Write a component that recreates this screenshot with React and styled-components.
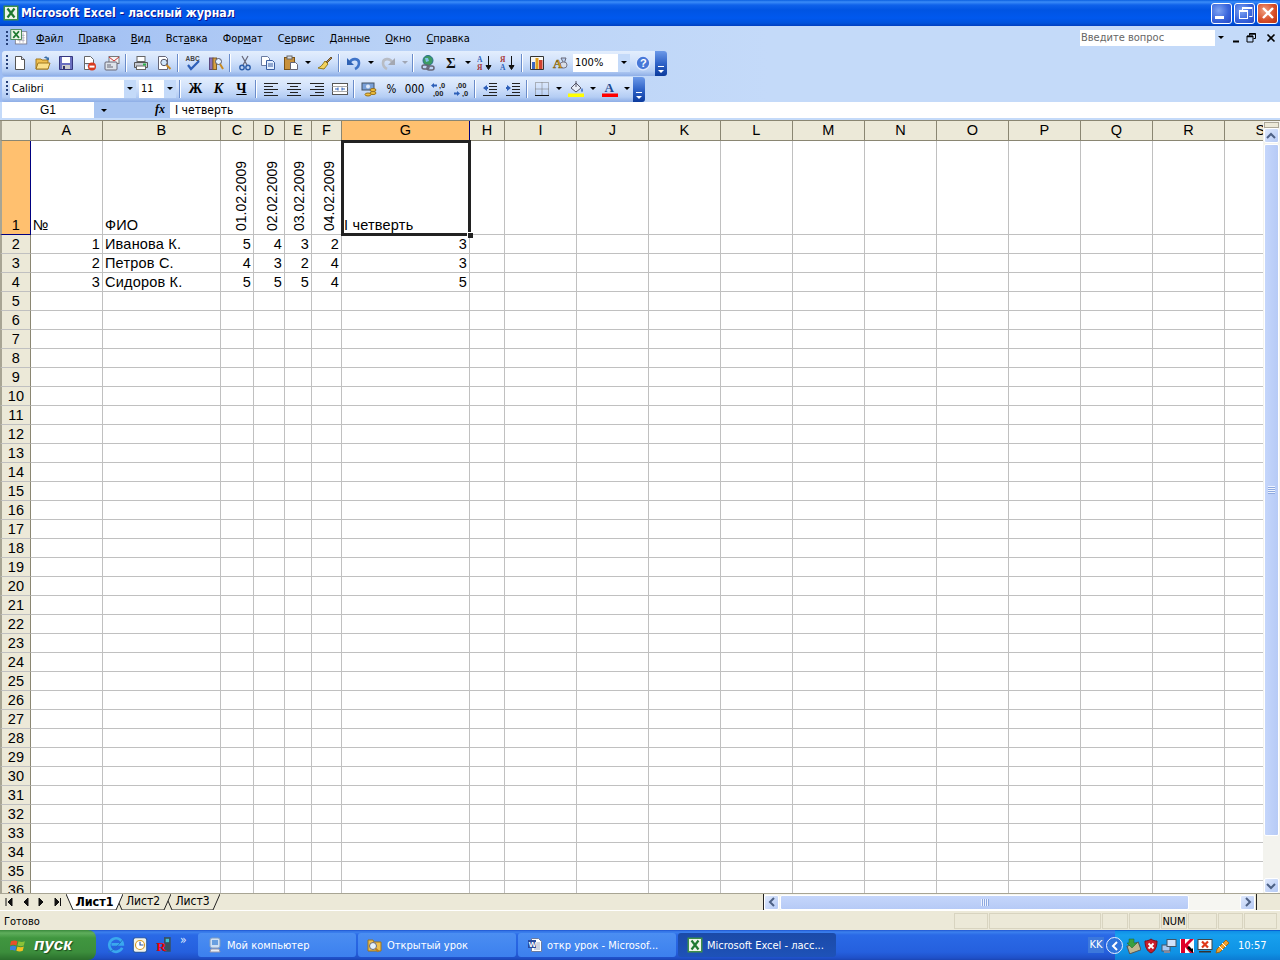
import React from 'react';
import styled, { createGlobalStyle } from 'styled-components';

const UI_FONT = `"DejaVu Sans Condensed", "Noto Sans", sans-serif`;
const CELL_FONT = `"Liberation Sans", Arial, sans-serif`;

const COLUMNS = [
    ['A', 72], ['B', 118], ['C', 33], ['D', 31], ['E', 27], ['F', 30], ['G', 128], ['H', 35],
    ['I', 72], ['J', 72], ['K', 72], ['L', 72], ['M', 72], ['N', 72], ['O', 72], ['P', 72], ['Q', 72], ['R', 72], ['S', 72],
];

const CELLS = {
    A1: '№', B1: 'ФИО', G1: 'I четверть',
    C1: '01.02.2009', D1: '02.02.2009', E1: '03.02.2009', F1: '04.02.2009',
    A2: '1', B2: 'Иванова К.', C2: '5', D2: '4', E2: '3', F2: '2', G2: '3',
    A3: '2', B3: 'Петров С.', C3: '4', D3: '3', E3: '2', F3: '4', G3: '3',
    A4: '3', B4: 'Сидоров К.', C4: '5', D4: '5', E4: '5', F4: '4', G4: '5',
};

const MENU = [
    ['', 'Ф', 'айл'], ['', 'П', 'равка'], ['', 'В', 'ид'], ['Вст', 'а', 'вка'], ['Фор', 'м', 'ат'],
    ['С', 'е', 'рвис'], ['', 'Д', 'анные'], ['', 'О', 'кно'], ['', 'С', 'правка'],
];

const ICONS = {
    excel: <><rect x=".5" y=".5" width="15" height="15" fill="#3f8f4a" /><rect x="2" y="2" width="12" height="12" fill="#eef6ea" /><path d="M4.500 3.500l7 9M11.500 3.500l-7 9" stroke="#1f7a30" strokeWidth="2.200" /></>,
    page: <><path d="M3.500 1.500h6l3 3v10h-9z" fill="#fff" stroke="#555" /><path d="M9.500 1.500v3h3" fill="#dde" stroke="#555" /></>,
    open: <><path d="M1 4h5l1 1h6v9H1z" fill="#f0c050" stroke="#a07820" /><path d="M3 8h12l-2 6H1z" fill="#fbe08a" stroke="#a07820" /><path d="M9 3c1-2 3-2 4 0l1-1v3h-3l1-1c-1-1-2-1-3-1z" fill="#3a6ea5" /></>,
    save: <><path d="M1.500 1.500h13v13h-13z" fill="#6a6fc0" stroke="#35377e" /><rect x="4" y="2" width="8" height="6" fill="#fff" /><rect x="4" y="10" width="8" height="4" fill="#ccc" /><rect x="5" y="11" width="2" height="3" fill="#336" /></>,
    perm: <><path d="M3.500 1.500h6l3 3v4h-9z" fill="#fff" stroke="#666" /><path d="M3.500 8v6.500h5" fill="#fff" stroke="#666" /><circle cx="11" cy="11.500" r="4" fill="#d83a20" /><rect x="8.500" y="10.600" width="5" height="2" fill="#fff" /></>,
    mail: <><rect x="5" y="1.500" width="10" height="7" fill="#f4f4f4" stroke="#777" /><path d="M5 2l5 4 5-4" fill="none" stroke="#c33" /><rect x="1" y="7" width="12" height="8" rx="1" fill="#dde3ea" stroke="#667" /><path d="M3 10h4M3 12h6" stroke="#667" /></>,
    print: <><rect x="4" y="1.500" width="8" height="5" fill="#fff" stroke="#666" /><path d="M1.500 7.500h13v5h-13z" fill="#c8ccd4" stroke="#555" /><rect x="3.500" y="11" width="9" height="3.500" fill="#fff" stroke="#666" /><rect x="10" y="8.500" width="3" height="2" fill="#2cb34a" /></>,
    preview: <><path d="M2.500 1.500h7l2 2v11h-9z" fill="#fff" stroke="#667" /><circle cx="8" cy="7.500" r="3.200" fill="#cfe6fb" stroke="#556" /><path d="M10.500 10l4 4" stroke="#c98a20" strokeWidth="2" /></>,
    spell: <><text x="0.500" y="6" fontSize="6.500" fontWeight="700" fontFamily="Liberation Sans" fill="#444">ABC</text><path d="M3 10l3 4 8-8" fill="none" stroke="#2d5fb8" strokeWidth="2.200" /></>,
    research: <><rect x="1.500" y="3" width="3.500" height="11.500" fill="#8d74b8" stroke="#5a4880" /><rect x="5" y="3" width="3.500" height="11.500" fill="#d8a040" stroke="#80602a" /><circle cx="10.500" cy="6.500" r="3" fill="#e5f2ff" stroke="#556" /><path d="M12 9l3 5" stroke="#c98a20" strokeWidth="2" /></>,
    cut: <><path d="M5 1l5 9M11 1l-5 9" stroke="#667" strokeWidth="1.200" /><circle cx="5" cy="12.500" r="2.200" fill="none" stroke="#2b5ca8" strokeWidth="1.400" /><circle cx="11" cy="12.500" r="2.200" fill="none" stroke="#2b5ca8" strokeWidth="1.400" /></>,
    copy: <><path d="M1.500 1.500h6l2 2v7h-8z" fill="#fff" stroke="#6a7ba0" /><path d="M6.500 5.500h6l2 2v7h-8z" fill="#e4efff" stroke="#3a5ea0" /><path d="M8 9h5M8 11h5" stroke="#3a5ea0" /></>,
    paste: <><rect x="1.500" y="2.500" width="10" height="12" fill="#c8913c" stroke="#7a5318" /><rect x="4" y="1" width="5" height="3" fill="#ddd" stroke="#666" /><path d="M7.500 7.500h5l2 2v5h-7z" fill="#fff" stroke="#667" /></>,
    painter: <><path d="M9 7l5-5 1 1-5 5z" fill="#b58b50" stroke="#6e5228" /><path d="M8 6l3 3-4 5-6-1c3-1 5-4 7-7z" fill="#f3d25c" stroke="#947c20" /></>,
    undo: <><path d="M4 7c2-4 9-4 9 1 0 3-2 5-4 6" fill="none" stroke="#3f74c8" strokeWidth="2.600" /><path d="M1 3v7h7z" fill="#2f62b4" /></>,
    redo: <><path d="M12 7c-2-4-9-4-9 1 0 3 2 5 4 6" fill="none" stroke="#b8bcc4" strokeWidth="2.600" /><path d="M15 3v7H8z" fill="#a4a8b2" /></>,
    link: <><circle cx="8" cy="5.500" r="5" fill="#3d9b62" stroke="#2a6f8a" /><path d="M5 3h3l1 3-3 1z" fill="#7fc0e8" /><rect x="2" y="10" width="7" height="4" rx="2" fill="none" stroke="#667" strokeWidth="1.500" /><rect x="7" y="11" width="7" height="4" rx="2" fill="none" stroke="#667" strokeWidth="1.500" /></>,
    sum: <text x="3" y="13" fontSize="15" fontWeight="700" fontFamily="Liberation Serif" fill="#111">Σ</text>,
    sortaz: <><text x="0" y="7" fontSize="7.500" fontWeight="700" fontFamily="Liberation Serif" fill="#2d5fb8">A</text><text x="0" y="15" fontSize="7.500" fontWeight="700" fontFamily="Liberation Serif" fill="#a83838">Я</text><path d="M11.500 1v12M9 10.500l2.500 4 2.500-4z" stroke="#111" fill="#111" /></>,
    sortza: <><text x="0" y="7" fontSize="7.500" fontWeight="700" fontFamily="Liberation Serif" fill="#a83838">Я</text><text x="0" y="15" fontSize="7.500" fontWeight="700" fontFamily="Liberation Serif" fill="#2d5fb8">A</text><path d="M11.500 1v12M9 10.500l2.500 4 2.500-4z" stroke="#111" fill="#111" /></>,
    chart: <><path d="M1.500 1.500h13v13h-13z" fill="#f7f7f2" stroke="#333" /><rect x="3" y="7" width="3" height="7" fill="#3a66c4" /><rect x="6.500" y="3" width="3" height="11" fill="#e0a020" /><rect x="10" y="5" width="3.500" height="9" fill="#d04030" /></>,
    drawing: <><path d="M9 3l5 0-2 6z" fill="#bcd0f0" stroke="#667" /><rect x="8" y="7" width="7" height="6" rx="3" fill="#d8dde8" stroke="#778" /><text x="1" y="13" fontSize="13" fontWeight="700" fontFamily="Liberation Serif" fill="#d8a020" stroke="#6a5010" strokeWidth=".4">A</text></>,
    help: <><circle cx="8" cy="8" r="6.800" fill="#4878d8" stroke="#dce8ff" strokeWidth="1.300" /><text x="5" y="12" fontSize="11" fontWeight="700" fontFamily="Liberation Sans" fill="#fff">?</text></>,
    alignL: <path d="M1 2.500h14M1 5.500h9M1 8.500h14M1 11.500h9M1 14.500h14" stroke="#222" />,
    alignC: <path d="M1 2.500h14M4 5.500h8M1 8.500h14M4 11.500h8M1 14.500h14" stroke="#222" />,
    alignR: <path d="M1 2.500h14M6 5.500h9M1 8.500h14M6 11.500h9M1 14.500h14" stroke="#222" />,
    merge: <><rect x=".5" y="2.500" width="15" height="11" fill="#fff" stroke="#555" /><path d="M.5 5.500h15M.5 10.500h15" stroke="#aaa" /><path d="M3 8h3M10 8h3M6 6.500v3M10 6.500v3" stroke="#2d5fb8" /></>,
    currency: <><rect x="1" y="2" width="12" height="7" fill="#79a0d8" stroke="#456" /><circle cx="7" cy="5.500" r="2" fill="#dfe9f8" /><ellipse cx="12" cy="9" rx="3" ry="1.500" fill="#f0c040" stroke="#97701a" /><ellipse cx="12" cy="12" rx="3" ry="1.500" fill="#f0c040" stroke="#97701a" /><ellipse cx="7" cy="13.500" rx="3" ry="1.500" fill="#f0c040" stroke="#97701a" /></>,
    incDec: <><path d="M1 4.500l3-2.500v1.500h3v2H4V7z" fill="#2d5fb8" /><text x="9" y="7" fontSize="7.500" fontWeight="700" fontFamily="Liberation Sans" fill="#222">,0</text><text x="3" y="15" fontSize="7.500" fontWeight="700" fontFamily="Liberation Sans" fill="#222">,00</text></>,
    decDec: <><text x="3" y="7" fontSize="7.500" fontWeight="700" fontFamily="Liberation Sans" fill="#222">,00</text><path d="M7 12.500l-3 2.500v-1.500H1v-2h3V10z" fill="#2d5fb8" /><text x="9" y="15" fontSize="7.500" fontWeight="700" fontFamily="Liberation Sans" fill="#222">,0</text></>,
    outdent: <><path d="M7 2.500h8M7 5.500h8M7 8.500h8M7 11.500h8M1 14.500h14" stroke="#222" /><path d="M1 7l4-3v2h1v2H5v2z" fill="#2d5fb8" /></>,
    indent: <><path d="M7 2.500h8M7 5.500h8M7 8.500h8M7 11.500h8M1 14.500h14" stroke="#222" /><path d="M6 7L2 4v2H1v2h1v2z" fill="#2d5fb8" /></>,
    borders: <><path d="M1.500 1.500h13v13h-13zM8 1.500v13M1.500 8h13" fill="none" stroke="#777" strokeDasharray="1 1" /><path d="M1 14.500h14" stroke="#111" /></>,
    fill: <><path d="M3 7l5-5 5 5-5 4z" fill="#e8eef8" stroke="#556" /><path d="M8 0v6" stroke="#556" /><path d="M14 7c1 1 1 4 0 4s-1-3 0-4z" fill="#2d5fb8" /><rect x="0" y="12.500" width="16" height="3.500" fill="#ffff00" /></>,
    fontColor: <><text x="2.500" y="11" fontSize="13" fontWeight="700" fontFamily="Liberation Serif" fill="#1f4a90">A</text><rect x="0" y="12.500" width="16" height="3.500" fill="#ff0000" /></>,
    ie: <><path d="M13.500 10.500A6 6 0 1 1 14 7.500H4" fill="none" stroke="#3aa8ee" strokeWidth="2.400" /><path d="M1 14c2 1 9-5 13-11" fill="none" stroke="#1f6fc0" strokeWidth=".8" /></>,
    outlook: <><rect x="2" y="1.500" width="12" height="13" rx="2" fill="#f3f3e8" stroke="#2a5aa8" /><circle cx="8" cy="8" r="4" fill="#fff" stroke="#d89a20" /><path d="M8 5v3h3" stroke="#2a5aa8" fill="none" /></>,
    remote: <><rect x="8" y="1" width="6" height="13" fill="#385060" /><rect x="9.500" y="2.500" width="3" height="3" fill="#40c0d0" /><text x="1" y="13" fontSize="12" fontWeight="700" fontFamily="Liberation Serif" fill="#f00000">R</text></>,
    computer: <><rect x="3" y="1" width="10" height="10" rx="2" fill="#cfe0f4" stroke="#7f9cc0" /><rect x="5" y="3" width="6" height="5" fill="#6aa0e0" /><path d="M4 12h8l1 3H3z" fill="#e8eef6" stroke="#99a" /></>,
    folder: <><path d="M1 3h5l1 2h7v9H1z" fill="#eec050" stroke="#9a7420" /><circle cx="6" cy="9" r="3.500" fill="#e5f1fb" stroke="#667" /><path d="M8.500 11.500l3 3" stroke="#bb8020" strokeWidth="2" /></>,
    word: <><path d="M4.500 1.500h7l3 3v10h-10z" fill="#fff" stroke="#6a7ba0" /><path d="M7 6h6M7 8h6M7 10h6M7 12h6" stroke="#99a6c2" /><rect x="1" y="3" width="8" height="8" fill="#2a4a9c" /><text x="1.800" y="10" fontSize="8" fontWeight="700" fontFamily="Liberation Sans" fill="#fff">W</text></>,
    flag: <><path d="M1 4c2-1 4-1 6 0l-1 4c-2-1-4-1-6 0z" fill="#e8502a" /><path d="M8 4c2 1 4 1 6 0l-1 4c-2 1-4 1-6 0z" fill="#8ac238" /><path d="M0 9c2-1 4-1 6 0l-1 4c-2-1-4-1-6 0z" fill="#3a80e0" /><path d="M7 9c2 1 4 1 6 0l-1 4c-2 1-4 1-6 0z" fill="#f4c020" /></>,
    trayUpdate: <><rect x="3" y="6" width="12" height="8" fill="#c0b890" stroke="#555" transform="rotate(-20 9 10)" /><path d="M4 1h5v4h3l-5 5-5-5h2z" fill="#3aa040" stroke="#206028" strokeWidth=".5" /></>,
    shield: <><path d="M8 1c2 1.500 4 2 6 2 0 6-2 10-6 12C4 13 2 9 2 3c2 0 4-.5 6-2z" fill="#c81e2c" stroke="#7a1018" /><path d="M5.500 5.500l5 5M10.500 5.500l-5 5" stroke="#fff" strokeWidth="1.800" /></>,
    network: <><rect x="1" y="7" width="8" height="6" fill="#a8c8f0" stroke="#456" /><rect x="6" y="1.500" width="9" height="7" fill="#cfe2fa" stroke="#456" /><rect x="3" y="13" width="6" height="2" fill="#889" /></>,
    kaspersky: <><rect x="1" y="1" width="14" height="14" fill="#fff" /><path d="M2 1h4v5l5-5h4L9 7l6 8h-4L6 9v6H2z" fill="#e0002a" /><path d="M8 10l6 5v-5l-1 1-3-3z" fill="#000" /></>,
    monitor: <><rect x="1" y="1.500" width="14" height="10" fill="#fff" stroke="#444" /><path d="M5 3.500l6 6M11 3.500l-6 6" stroke="#e03818" strokeWidth="2.200" /><path d="M2 13h12v1.500H2z" fill="#333" /></>,
    pencil: <><path d="M2 11L11 2l3 3-9 9-4 1z" fill="#f0a030" stroke="#9a6a18" /><path d="M4 8l4 4M7 5l4 4" stroke="#fff" /></>,
};

const Icon = ({ name, size = 16 }) => (
    <svg width={size} height={size} viewBox="0 0 16 16" style={{ display: 'block', flex: 'none' }}>{ICONS[name]}</svg>
);

const ROW_ONE = [
    'page', 'open', 'save', 'perm', 'mail', '|', 'print', 'preview', '|', 'spell', 'research', '|',
    'cut', 'copy', 'paste', 'v', 'painter', '|', 'undo', 'v', 'redo', 'v-off', '|', 'link', 'sum', 'v', 'sortaz', 'sortza', '|', 'chart', 'drawing',
];

const ROW_TWO_A = ['alignL', 'alignC', 'alignR', 'merge', '|', 'currency', '%', '000', 'incDec', 'decDec', '|', 'outdent', 'indent', '|', 'borders', 'v', 'fill', 'v', 'fontColor', 'v'];

const ToolItems = ({ items }) => items.map((item, index) => {
    if (item === '|') return <ToolSep key={index} />;
    if (item === 'v') return <DropArrow key={index}><DownTriangle /></DropArrow>;
    if (item === 'v-off') return <DropArrow key={index}><DownTriangle $off /></DropArrow>;
    if (item === '%' || item === '000') return <ToolButton key={index}><NumberGlyph>{item}</NumberGlyph></ToolButton>;
    return <ToolButton key={index}><Icon name={item} /></ToolButton>;
});

const TabShape = ({ width, active }) => (
    <TabSvg width={width} height="17" viewBox={`0 0 ${width} 17`}>
        <path d={`M0 0 L7 16 L${width - 7} 16 L${width} 0`} fill={active ? '#fff' : '#ece9d8'} stroke="#222" />
    </TabSvg>
);

export default function App() {
    const rows = Array.from({ length: 36 }, (_, i) => i + 1);
    return (
        <Screen>
            <GlobalStyle />
            <TitleBar>
                <Icon name="excel" />
                <TitleText>Microsoft Excel - лассный журнал</TitleText>
                <WindowButtons>
                    <WindowButton><MinGlyph /></WindowButton>
                    <WindowButton><RestoreGlyph /></WindowButton>
                    <WindowButton $close>
                        <svg width="14" height="14" viewBox="0 0 14 14"><path d="M2 2l10 10M12 2L2 12" stroke="#fff" strokeWidth="2.400" /></svg>
                    </WindowButton>
                </WindowButtons>
            </TitleBar>

            <CommandBand>
                <MenuBar>
                    <Grip />
                    <DocIcon>
                        <svg width="18" height="18" viewBox="0 0 22 20">
                            <rect x="6.500" y="3.500" width="14" height="15" fill="#fff" stroke="#778" />
                            <path d="M9 8h9M9 11h9M9 14h9M12 5v12M16 5v12" stroke="#aab" />
                            <rect x="1" y="1" width="13" height="12" fill="#eef6ea" stroke="#2f7a3c" />
                            <path d="M4 3l7 8M11 3l-7 8" stroke="#1f7a30" strokeWidth="2.200" />
                        </svg>
                    </DocIcon>
                    {MENU.map(([before, key, after]) => (
                        <MenuItem key={before + key + after}>{before}<u>{key}</u>{after}</MenuItem>
                    ))}
                    <AskBox>
                        <AskText>Введите вопрос</AskText>
                        <ComboArrow $small><DownTriangle /></ComboArrow>
                    </AskBox>
                    <DocControls>
                        <svg width="14" height="10" viewBox="0 0 14 10"><path d="M1 8.500h6" stroke="#000" strokeWidth="2" /></svg>
                        <svg width="12" height="10" viewBox="0 0 12 10"><path d="M3.500 2.500v-2h6v5h-2M1 3h6v6H1z" fill="none" stroke="#000" /><path d="M1 3.500h6M3.500 1h6" stroke="#000" strokeWidth="1.500" /></svg>
                        <svg width="10" height="10" viewBox="0 0 10 10"><path d="M1.500 1.500l7 7M8.500 1.500l-7 7" stroke="#000" strokeWidth="1.600" /></svg>
                    </DocControls>
                </MenuBar>

                <ToolBar $width={665}>
                    <Grip />
                    <ToolItems items={ROW_ONE} />
                    <ComboBox $width={57} $ml={2}>
                        <ComboText>100%</ComboText>
                        <ComboArrow><DownTriangle /></ComboArrow>
                    </ComboBox>
                    <ToolButton $first><Icon name="help" /></ToolButton>
                    <Chevron><ChevronMark /></Chevron>
                </ToolBar>

                <ToolBar $width={643}>
                    <Grip />
                    <ComboBox $width={126} $ml={2}>
                        <ComboText>Calibri</ComboText>
                        <ComboArrow><DownTriangle /></ComboArrow>
                    </ComboBox>
                    <ComboBox $width={37} $ml={3}>
                        <ComboText>11</ComboText>
                        <ComboArrow><DownTriangle /></ComboArrow>
                    </ComboBox>
                    <ToolSep $wide />
                    <ToolButton><FontGlyph $bold>Ж</FontGlyph></ToolButton>
                    <ToolButton><FontGlyph $bold $italic>К</FontGlyph></ToolButton>
                    <ToolButton><FontGlyph $bold $underline>Ч</FontGlyph></ToolButton>
                    <ToolSep />
                    <ToolItems items={ROW_TWO_A} />
                    <Chevron><ChevronMark /></Chevron>
                </ToolBar>
            </CommandBand>

            <FormulaBar>
                <NameBox>G1</NameBox>
                <NameArrow><DownTriangle /></NameArrow>
                <FxLabel>fx</FxLabel>
                <FormulaInput>I четверть</FormulaInput>
            </FormulaBar>

            <SheetArea>
                <SheetClip>
                    <SheetGrid>
                        <ColumnHead $corner />
                        {COLUMNS.map(([name]) => <ColumnHead key={name} $selected={name === 'G'}>{name}</ColumnHead>)}
                        {rows.map((row) => (
                            <React.Fragment key={row}>
                                <RowHead $selected={row === 1}>{row}</RowHead>
                                {COLUMNS.map(([name]) => {
                                    const value = CELLS[name + row];
                                    const isDate = row === 1 && 'CDEF'.includes(name);
                                    const isNumber = value !== undefined && /^\d$/.test(value);
                                    return (
                                        <Cell key={name} $right={isNumber || isDate} $current={name === 'G' && row === 1}>
                                            {isDate ? <DateText>{value}</DateText> : value}
                                            {name === 'G' && row === 1 && <FillHandle />}
                                        </Cell>
                                    );
                                })}
                            </React.Fragment>
                        ))}
                    </SheetGrid>
                </SheetClip>
                <VScroll>
                    <SplitBox />
                    <ScrollButton><ScrollArrow d="M2 8l4-4 4 4" /></ScrollButton>
                    <VThumb><GripLines $vertical /></VThumb>
                    <VTrack />
                    <ScrollButton><ScrollArrow d="M2 4l4 4 4-4" /></ScrollButton>
                </VScroll>
            </SheetArea>

            <TabRow>
                <TabNav>
                    <svg width="62" height="12" viewBox="0 0 62 12">
                        <path d="M4 2v8M10 2L6 6l4 4zM26 2l-4 4 4 4zM37 2l4 4-4 4zM53 2l4 4-4 4zM58.500 2v8" fill="#111" stroke="#111" />
                    </svg>
                </TabNav>
                <Tab $width={57} $z={3}><TabShape width={57} active /><TabLabel $active>Лист1</TabLabel></Tab>
                <Tab $width={56} $z={2} $ml={-8}><TabShape width={56} /><TabLabel>Лист2</TabLabel></Tab>
                <Tab $width={55} $z={1} $ml={-6}><TabShape width={55} /><TabLabel>Лист3</TabLabel></Tab>
                <TabSpacer />
                <SplitBar />
                <HScroll>
                    <ScrollButton><ScrollArrow d="M8 2L4 6l4 4" /></ScrollButton>
                    <HThumb><GripLines /></HThumb>
                    <HTrack />
                    <ScrollButton><ScrollArrow d="M4 2l4 4-4 4" /></ScrollButton>
                </HScroll>
                <SplitBar $end />
            </TabRow>

            <StatusBar>
                <StatusText>Готово</StatusText>
                <StatusPanels>
                    <StatusPanel $width={34} />
                    <StatusPanel $width={112} />
                    <StatusPanel $width={26} />
                    <StatusPanel $width={31} />
                    <StatusPanel $width={26}>NUM</StatusPanel>
                    <StatusPanel $width={29} />
                    <StatusPanel $width={25} />
                    <StatusPanel $width={33} />
                </StatusPanels>
            </StatusBar>

            <Taskbar>
                <StartButton>
                    <Icon name="flag" size={17} />
                    <StartLabel>пуск</StartLabel>
                </StartButton>
                <QuickLaunch>
                    <Icon name="ie" size={18} />
                    <Icon name="outlook" size={18} />
                    <Icon name="remote" size={18} />
                    <MoreMark>»</MoreMark>
                </QuickLaunch>
                <TaskList>
                    <TaskButton><Icon name="computer" /><TaskLabel>Мой компьютер</TaskLabel></TaskButton>
                    <TaskButton><Icon name="folder" /><TaskLabel>Открытый урок</TaskLabel></TaskButton>
                    <TaskButton><Icon name="word" /><TaskLabel>откр урок - Microsof...</TaskLabel></TaskButton>
                    <TaskButton $active><Icon name="excel" /><TaskLabel>Microsoft Excel - ласс...</TaskLabel></TaskButton>
                </TaskList>
                <LangMark>KK</LangMark>
                <Tray>
                    <TrayExpand>
                        <svg width="10" height="10" viewBox="0 0 10 10"><path d="M7 1L3 5l4 4" fill="none" stroke="#fff" strokeWidth="2" /></svg>
                    </TrayExpand>
                    <Icon name="trayUpdate" />
                    <Icon name="shield" />
                    <Icon name="network" />
                    <Icon name="kaspersky" />
                    <Icon name="monitor" />
                    <Icon name="pencil" />
                    <Clock>10:57</Clock>
                </Tray>
            </Taskbar>
        </Screen>
    );
}

const ScrollArrow = ({ d }) => (
    <svg width="12" height="12" viewBox="0 0 12 12"><path d={d} fill="none" stroke="#4d6185" strokeWidth="2" /></svg>
);

const GlobalStyle = createGlobalStyle`
    html, body {
        margin: 0;
        padding: 0;
        overflow: hidden;
    }
    * {
        box-sizing: border-box;
    }
`;

const Screen = styled.div`
    width: 1280px;
    height: 960px;
    display: flex;
    flex-direction: column;
    overflow: hidden;
    background: #ece9d8;
    font-family: ${UI_FONT};
    font-size: 11px;
    color: #000;
`;

const TitleBar = styled.div`
    height: 26px;
    flex: none;
    display: flex;
    align-items: center;
    padding: 0 2px 0 3px;
    background: linear-gradient(180deg, #0a5fe0 0, #3b8cf8 2px, #0f62ea 5px, #0054e3 10px, #0058ee 18px, #0052dc 23px, #003fc0 26px);
`;

const TitleText = styled.div`
    margin-left: 2px;
    font-weight: 700;
    font-size: 12.250px;
    color: #fff;
    text-shadow: 1px 1px 0 #0f1089;
    white-space: nowrap;
`;

const WindowButtons = styled.div`
    margin-left: auto;
    display: flex;
    gap: 2px;
`;

const WindowButton = styled.div`
    width: 21px;
    height: 21px;
    display: flex;
    align-items: center;
    justify-content: center;
    border: 1px solid #fff;
    border-radius: 3px;
    background: ${(p) => (p.$close
        ? 'radial-gradient(circle at 35% 35%, #f0a080, #d8502a 55%, #b83010)'
        : 'radial-gradient(circle at 35% 35%, #7fa4f2, #3a66dc 55%, #2548c4)')};
`;

const MinGlyph = styled.div`
    width: 9px;
    height: 3px;
    margin: 9px 5px 0 0;
    background: #fff;
`;

const RestoreGlyph = styled.div`
    position: relative;
    width: 9px;
    height: 9px;
    margin: 3px 3px 0 0;
    border: 1px solid #fff;
    border-top-width: 2px;
    &:after {
        content: '';
        position: absolute;
        left: 2px;
        top: -5px;
        width: 9px;
        height: 7px;
        border: 1px solid #fff;
        border-top-width: 2px;
        clip-path: polygon(0 0, 100% 0, 100% 100%, 70% 100%, 70% 40%, 0 40%);
    }
`;

const CommandBand = styled.div`
    height: 76px;
    flex: none;
    display: flex;
    flex-direction: column;
    background: linear-gradient(90deg, #9ebdf3 0, #b8d1f6 30%, #c4daf9 60%);
`;

const MenuBar = styled.div`
    height: 25px;
    display: flex;
    align-items: center;
    padding: 0 0 1px 2px;
`;

const Grip = styled.div`
    width: 2px;
    height: 15px;
    margin-left: 4px;
    flex: none;
    background: repeating-linear-gradient(180deg, #27417a 0 2px, transparent 2px 4px);
`;

const DocIcon = styled.div`
    width: 18px;
    flex: none;
    margin: 0 3px 0 2px;
`;

const MenuItem = styled.div`
    padding: 0 8px 0 5px;
    font-size: 11px;
    white-space: nowrap;
    margin-right: 2px;
    &:nth-of-type(n) {
        letter-spacing: -0.020px;
    }
`;

const AskBox = styled.div`
    margin: 0 0 1px auto;
    width: 148px;
    height: 18px;
    display: flex;
    align-items: center;
    justify-content: space-between;
    background: #fff;
    border: 1px solid #c4daf9;
`;

const AskText = styled.div`
    padding-left: 1px;
    color: #666;
    font-size: 11px;
`;

const DocControls = styled.div`
    width: 53px;
    display: flex;
    align-items: center;
    padding: 0 4px 0 5px;
    svg:last-child {
        margin-left: auto;
    }
`;

const ToolBar = styled.div`
    width: ${(p) => p.$width}px;
    height: 25px;
    flex: none;
    margin-left: 2px;
    margin-bottom: 1px;
    padding-bottom: 2px;
    display: flex;
    align-items: center;
    border-radius: 3px;
    background: linear-gradient(180deg, #e3eefd 0, #d2e2fb 40%, #b4cdf4 80%, #8eaee6 100%);
    position: relative;
    &:last-child {
        margin-bottom: 0;
    }
`;

const ToolButton = styled.div`
    width: 23px;
    height: 22px;
    flex: none;
    display: flex;
    align-items: center;
    justify-content: center;
    margin-left: ${(p) => (p.$first ? '1px' : '0')};
`;

const DropArrow = styled.div`
    width: 11px;
    height: 22px;
    flex: none;
    display: flex;
    align-items: center;
    justify-content: center;
`;

const DownTriangle = styled.div`
    width: 0;
    height: 0;
    border-left: 3px solid transparent;
    border-right: 3px solid transparent;
    border-top: 3px solid ${(p) => (p.$off ? '#a0a6b4' : '#000')};
`;

const ToolSep = styled.div`
    width: 2px;
    height: 18px;
    flex: none;
    margin: 0 2px;
    background: linear-gradient(90deg, #6a8cca 50%, #fff 50%);
    ${(p) => p.$wide && 'margin: 0 3px 0 3px;'}
`;

const NumberGlyph = styled.span`
    font-size: 11.500px;
`;

const FontGlyph = styled.span`
    font-family: "Liberation Serif", serif;
    font-size: 14px;
    font-weight: ${(p) => (p.$bold ? 700 : 400)};
    font-style: ${(p) => (p.$italic ? 'italic' : 'normal')};
    text-decoration: ${(p) => (p.$underline ? 'underline' : 'none')};
`;

const ComboBox = styled.div`
    width: ${(p) => p.$width}px;
    height: 18px;
    flex: none;
    margin-left: ${(p) => p.$ml}px;
    display: flex;
    align-items: center;
    justify-content: space-between;
    background: #fff;
`;

const ComboText = styled.div`
    padding-left: 2px;
    font-size: 11px;
`;

const ComboArrow = styled.div`
    width: ${(p) => (p.$small ? 11 : 12)}px;
    height: 100%;
    display: flex;
    align-items: center;
    justify-content: center;
    background: #c4daf9;
`;

const Chevron = styled.div`
    position: absolute;
    right: 0;
    top: 0;
    bottom: 0;
    width: 12px;
    display: flex;
    align-items: flex-end;
    justify-content: center;
    padding-bottom: 3px;
    border-radius: 0 3px 3px 0;
    background: linear-gradient(180deg, #6c99e8 0, #2f63c8 50%, #0b3a9c 100%);
`;

const ChevronMark = styled.div`
    width: 6px;
    height: 7px;
    border-top: 1px solid #fff;
    position: relative;
    &:after {
        content: '';
        position: absolute;
        left: 0;
        top: 3px;
        border-left: 3px solid transparent;
        border-right: 3px solid transparent;
        border-top: 3px solid #fff;
    }
`;

const FormulaBar = styled.div`
    height: 18px;
    flex: none;
    display: flex;
    padding: 0 0 2px 2px;
    background: #c4daf9;
`;

const NameBox = styled.div`
    width: 92px;
    background: #fff;
    text-align: center;
    font-family: ${CELL_FONT};
    font-size: 12px;
    line-height: 16px;
`;

const NameArrow = styled.div`
    width: 19px;
    display: flex;
    align-items: center;
    justify-content: center;
    background: #a9c5f1;
`;

const FxLabel = styled.div`
    width: 57px;
    padding-left: 42px;
    background: #a9c5f1;
    font-family: "Liberation Serif", serif;
    font-style: italic;
    font-weight: 700;
    font-size: 12px;
    line-height: 15px;
`;

const FormulaInput = styled.div`
    flex: 1;
    padding-left: 5px;
    background: #fff;
    font-size: 12px;
    line-height: 17px;
`;

const SheetArea = styled.div`
    height: 773px;
    flex: none;
    display: flex;
    border-top: 1px solid #8a8672;
    background: #fff;
`;

const SheetClip = styled.div`
    width: 1263px;
    flex: none;
    overflow: hidden;
`;

const SheetGrid = styled.div`
    display: grid;
    grid-template-columns: 31px ${COLUMNS.map(([, w]) => `${w}px`).join(' ')};
    grid-template-rows: 20px 94px repeat(35, 19px);
    font-family: ${CELL_FONT};
    font-size: 14.500px;
    letter-spacing: 0.2px;
`;

const ColumnHead = styled.div`
    display: flex;
    align-items: center;
    justify-content: center;
    padding-bottom: 1px;
    background: ${(p) => (p.$selected ? '#ffc06f' : '#ece9d8')};
    border-right: 1px solid ${(p) => (p.$selected ? '#000080' : '#8a8672')};
    border-bottom: 1px solid ${(p) => (p.$selected ? '#000080' : '#8a8672')};
    ${(p) => p.$corner && 'border-left: 2px solid #a8a594;'}
`;

const RowHead = styled.div`
    display: flex;
    align-items: flex-end;
    justify-content: center;
    padding-bottom: 1px;
    background: ${(p) => (p.$selected ? '#ffc06f' : '#ece9d8')};
    border-left: 2px solid #a8a594;
    border-right: 1px solid ${(p) => (p.$selected ? '#000080' : '#8a8672')};
    border-bottom: 1px solid ${(p) => (p.$selected ? '#000080' : '#c0c0c0')};
`;

const Cell = styled.div`
    position: relative;
    display: flex;
    align-items: flex-end;
    justify-content: ${(p) => (p.$right ? 'flex-end' : 'flex-start')};
    padding: 0 2px 1px;
    white-space: nowrap;
    border-right: 1px solid #c0c0c0;
    border-bottom: 1px solid #c0c0c0;
    ${(p) => p.$current && `
        outline: 3px solid #222;
        outline-offset: -2px;
        z-index: 1;
    `}
`;

const DateText = styled.div`
    writing-mode: vertical-rl;
    transform: rotate(180deg);
    margin-right: 3px;
    font-size: 14px;
    letter-spacing: 0;
    line-height: 1;
    padding-top: 2px;
`;

const FillHandle = styled.div`
    position: absolute;
    right: -4px;
    bottom: -4px;
    width: 6px;
    height: 6px;
    background: #222;
    border: 1px solid #fff;
    border-right: 0;
    border-bottom: 0;
`;

const VScroll = styled.div`
    width: 17px;
    flex: none;
    display: flex;
    flex-direction: column;
    align-items: center;
    padding-right: 1px;
    background: #f3f3ee;
`;

const SplitBox = styled.div`
    width: 15px;
    height: 6px;
    flex: none;
    margin-top: 1px;
    background: #ece9d8;
    border: 1px solid #aca899;
`;

const ScrollButton = styled.div`
    width: 15px;
    height: 15px;
    flex: none;
    display: flex;
    align-items: center;
    justify-content: center;
    border: 1px solid #fff;
    border-radius: 2px;
    background: linear-gradient(135deg, #dfe9fd, #b4c9f4);
`;

const VThumb = styled.div`
    width: 15px;
    height: 692px;
    flex: none;
    margin-top: 1px;
    display: flex;
    align-items: center;
    justify-content: center;
    border: 1px solid #fff;
    border-radius: 2px;
    background: linear-gradient(90deg, #c5d6fb, #b6caf6);
`;

const VTrack = styled.div`
    flex: 1;
`;

const GripLines = styled.div`
    width: ${(p) => (p.$vertical ? 7 : 8)}px;
    height: ${(p) => (p.$vertical ? 8 : 7)}px;
    background: ${(p) => (p.$vertical
        ? 'repeating-linear-gradient(180deg, #eef3fe 0 1px, #8ea9e0 1px 2px)'
        : 'repeating-linear-gradient(90deg, #eef3fe 0 1px, #8ea9e0 1px 2px)')};
`;

const TabRow = styled.div`
    height: 17px;
    flex: none;
    display: flex;
    align-items: flex-start;
    border-top: 1px solid #a8a594;
    background: #ece9d8;
    overflow: hidden;
`;

const TabNav = styled.div`
    width: 66px;
    height: 16px;
    flex: none;
    display: flex;
    align-items: center;
    padding-left: 2px;
`;

const Tab = styled.div`
    position: relative;
    width: ${(p) => p.$width}px;
    height: 16px;
    flex: none;
    margin-left: ${(p) => p.$ml || 0}px;
    z-index: ${(p) => p.$z};
`;

const TabSvg = styled.svg`
    position: absolute;
    inset: 0;
`;

const TabLabel = styled.div`
    position: relative;
    text-align: center;
    font-size: ${(p) => (p.$active ? '12.500px' : '12px')};
    line-height: 15px;
    font-weight: ${(p) => (p.$active ? 700 : 400)};
`;

const TabSpacer = styled.div`
    flex: 1;
`;

const SplitBar = styled.div`
    width: ${(p) => (p.$end ? '24px' : '3px')};
    height: 16px;
    flex: none;
    border-left: ${(p) => (p.$end ? '1px solid #222' : '0')};
    border-right: ${(p) => (p.$end ? '0' : '1px solid #222')};
    ${(p) => p.$end && 'margin-left: 1px;'}
`;

const HScroll = styled.div`
    width: 491px;
    height: 16px;
    flex: none;
    display: flex;
    align-items: center;
    background: #f6f6f2;
`;

const HThumb = styled.div`
    width: 409px;
    height: 15px;
    margin-left: 1px;
    display: flex;
    align-items: center;
    justify-content: center;
    border: 1px solid #fff;
    border-radius: 2px;
    background: linear-gradient(180deg, #c5d6fb, #b6caf6);
`;

const HTrack = styled.div`
    flex: 1;
`;

const StatusBar = styled.div`
    height: 20px;
    flex: none;
    display: flex;
    align-items: center;
    justify-content: space-between;
    border-top: 1px solid #fff;
    padding: 0 3px 0 4px;
    background: #ece9d8;
`;

const StatusText = styled.div`
    margin-top: 2px;
    font-size: 11px;
`;

const StatusPanels = styled.div`
    display: flex;
    gap: 1px;
`;

const StatusPanel = styled.div`
    width: ${(p) => p.$width}px;
    height: 16px;
    border: 1px solid #d8d4c0;
    text-align: center;
    font-size: 11px;
    line-height: 15px;
`;

const Taskbar = styled.div`
    height: 30px;
    flex: none;
    display: flex;
    align-items: center;
    background: linear-gradient(180deg, #1f55d0 0, #3c81ee 2px, #2a69e6 5px, #2560de 22px, #1f50c8 28px, #1b45b4 30px);
`;

const StartButton = styled.div`
    width: 96px;
    height: 30px;
    flex: none;
    display: flex;
    align-items: center;
    padding-left: 10px;
    gap: 7px;
    border-radius: 0 8px 8px 0;
    background: linear-gradient(180deg, #3a8a3c 0, #5fae5c 3px, #40963f 8px, #3c8e3c 22px, #2a6e2c 30px);
`;

const StartLabel = styled.div`
    font-family: "Liberation Sans", sans-serif;
    font-weight: 700;
    font-style: italic;
    font-size: 17px;
    color: #fff;
    text-shadow: 1px 1px 1px #1c4a1c;
`;

const QuickLaunch = styled.div`
    width: 100px;
    flex: none;
    display: flex;
    align-items: center;
    padding-left: 11px;
    gap: 6px;
`;

const MoreMark = styled.div`
    color: #dfe9fd;
    font-size: 12px;
    margin: -10px 0 0 1px;
`;

const TaskList = styled.div`
    display: flex;
    gap: 2px;
    margin-left: 2px;
`;

const TaskButton = styled.div`
    width: 158px;
    height: 24px;
    display: flex;
    align-items: center;
    gap: 4px;
    padding-left: 9px;
    border-radius: 3px;
    color: #fff;
    background: ${(p) => (p.$active
        ? 'linear-gradient(180deg, #1b4aa8 0, #1e52b8 100%)'
        : 'linear-gradient(180deg, #4b8ef2 0, #3c80ee 100%)')};
`;

const TaskLabel = styled.div`
    font-size: 11px;
    white-space: nowrap;
`;

const LangMark = styled.div`
    margin: 0 11px 0 auto;
    width: 16px;
    height: 16px;
    color: #fff;
    text-align: center;
    font-size: 11px;
    line-height: 16px;
    background: #3c78dc;
`;

const Tray = styled.div`
    width: 165px;
    height: 30px;
    flex: none;
    display: flex;
    align-items: center;
    gap: 2px;
    border-top: 1px solid #0a5fd0;
    background: linear-gradient(180deg, #0f8fe6 0, #17a0ee 4px, #0f92e4 22px, #0c78d0 30px);
`;

const TrayExpand = styled.div`
    width: 17px;
    height: 17px;
    flex: none;
    margin-left: -9px;
    display: flex;
    align-items: center;
    justify-content: center;
    border: 1px solid #e8f0ff;
    border-radius: 50%;
    background: #2d74dc;
`;

const Clock = styled.div`
    margin-left: 5px;
    color: #fff;
    font-size: 11px;
`;
